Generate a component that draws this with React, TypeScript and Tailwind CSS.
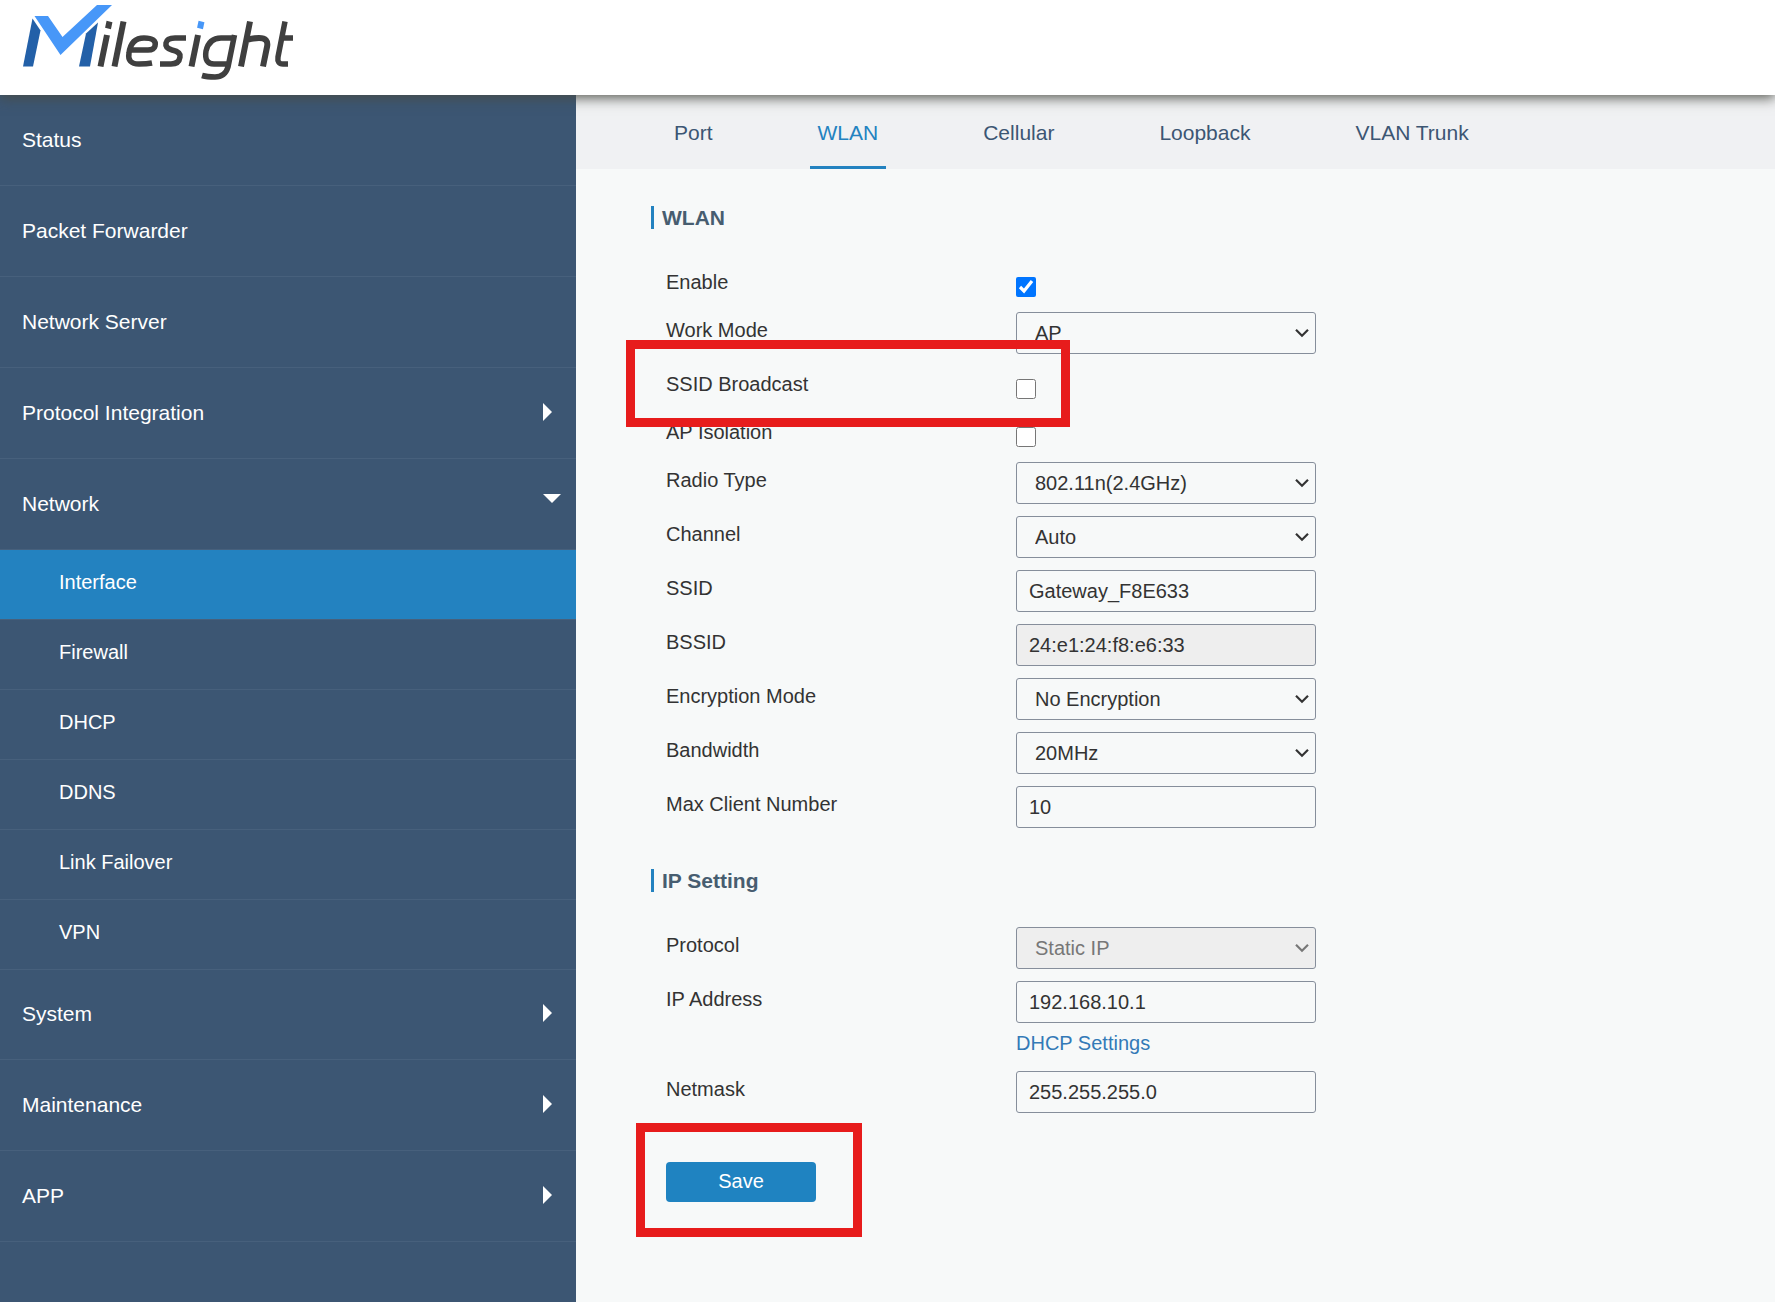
import React, { useId, useState } from 'react';
import clsx from 'clsx';

interface MenuItem {
  label: string;
  expandable?: boolean;
  children?: string[];
}

const MENU: MenuItem[] = [
  { label: 'Status' },
  { label: 'Packet Forwarder' },
  { label: 'Network Server' },
  { label: 'Protocol Integration', expandable: true },
  {
    label: 'Network',
    expandable: true,
    children: ['Interface', 'Firewall', 'DHCP', 'DDNS', 'Link Failover', 'VPN'],
  },
  { label: 'System', expandable: true },
  { label: 'Maintenance', expandable: true },
  { label: 'APP', expandable: true },
];

const TABS = ['Port', 'WLAN', 'Cellular', 'Loopback', 'VLAN Trunk'];

function Logo() {
  return (
    <svg width="300" height="95" viewBox="0 0 300 95" role="img" aria-label="Milesight">
      <path d="M32.500 18.500 L40.500 30.500 L33 66.500 L23 66.500 Z" fill="#2360a8" />
      <path d="M98 22.500 L90 66.500 L79 66.500 L86 33.500 Z" fill="#2360a8" />
      <path d="M34.500 16 L48 16 L62.500 37 L97 5 L112 5 L60.500 55 Z" fill="#4797f8" />
      <g fill="none" stroke="#3f3f3f" strokeWidth="6">
        <path d="M107 35 L100.500 66.500 M109.500 21.500 L108 28.500" />
        <path d="M123.500 21.500 L114.500 66.500" />
        <path
          d="M152 63 Q147 64 139 64 Q127 64 129 53 Q131 38 144 38 Q157 38 155 46 Q154 50 148 50 L131 50"
          strokeWidth="5.500"
        />
        <path
          d="M186 38 L175 38 Q167 38 166 43 Q165 48 172 50 Q181 52 180 57 Q179 64 171 64 L160 64"
          strokeWidth="5.500"
        />
        <path d="M198 35 L191.500 66.500" />
        <path
          d="M234.500 35 L228 67 Q225 77 215 77 Q207 77 202 75.500 M233 38 L221 38 Q209 38 206 51 Q204 64 214 64 L229 64"
          strokeWidth="5.500"
        />
        <path d="M250 21.500 L241 66.500 M247 40 Q253 38 259 38 Q269 38 267 47 L263 66.500" />
        <path
          d="M285 21.500 L278 57 Q277 64 283 64 L288 64 M283 38 L293 38"
          strokeWidth="5.500"
        />
      </g>
      <path d="M201.500 21.500 L200 28.500" stroke="#4797f8" strokeWidth="6" />
    </svg>
  );
}

function Caret({ open }: { open: boolean }) {
  return (
    <svg width="18" height="20" viewBox="0 0 18 20" fill="#fff" aria-hidden="true">
      {open ? <path d="M0 0 H18 L9 9 Z" /> : <path d="M0 0 L9 9 L0 18 Z" />}
    </svg>
  );
}

function Sidebar() {
  const [active, setActive] = useState('Interface');

  return (
    <nav className="w-[576px] shrink-0 bg-[#3c5673] text-white">
      <ul>
        {MENU.map((item) => (
          <li key={item.label}>
            <a
              href="#"
              className="flex h-[91px] items-center justify-between border-b border-[#47607c] pl-[22px] pr-[15px] text-[21px]"
            >
              {item.label}
              {item.expandable && <Caret open={!!item.children} />}
            </a>
            {item.children && (
              <ul className="-mb-px">
                {item.children.map((child) => (
                  <li key={child}>
                    <a
                      href="#"
                      onClick={() => setActive(child)}
                      className={clsx(
                        'flex h-[70px] items-center border-b border-[#47607c] pb-1.5 pl-[59px] text-[20px]',
                        child === active && 'bg-[#2382c0]',
                      )}
                    >
                      {child}
                    </a>
                  </li>
                ))}
              </ul>
            )}
          </li>
        ))}
      </ul>
    </nav>
  );
}

function Highlight({ className }: { className: string }) {
  return (
    <div className={clsx('pointer-events-none absolute z-10 border-9 border-[#e71c1c]', className)} />
  );
}

function SectionTitle({ children }: { children: React.ReactNode }) {
  return (
    <h2 className="border-l-3 border-[#2382c0] pl-2 text-[21px] leading-[23px] font-bold text-[#475d70]">
      {children}
    </h2>
  );
}

const controlClass =
  'block h-[42px] w-[300px] rounded-[3px] border border-[#868e9b] text-[20px] outline-none';

function CheckRow({
  label,
  defaultChecked,
  children,
}: {
  label: string;
  defaultChecked?: boolean;
  children?: React.ReactNode;
}) {
  const id = useId();
  return (
    <div className="relative flex h-12 items-start">
      <label htmlFor={id} className="w-[350px] leading-[36px]">
        {label}
      </label>
      <input
        id={id}
        type="checkbox"
        defaultChecked={defaultChecked}
        className="mt-[13px] size-5 accent-[#0075ff]"
      />
      {children}
    </div>
  );
}

function TextRow({
  label,
  value,
  readOnly,
  children,
}: {
  label: string;
  value: string;
  readOnly?: boolean;
  children?: React.ReactNode;
}) {
  const id = useId();
  return (
    <div className="flex items-start pb-3">
      <label htmlFor={id} className="w-[350px] leading-[36px]">
        {label}
      </label>
      <div>
        <input
          id={id}
          type="text"
          defaultValue={value}
          readOnly={readOnly}
          className={clsx(controlClass, 'px-3', readOnly && 'bg-[#eeeeee]')}
        />
        {children}
      </div>
    </div>
  );
}

function SelectRow({
  label,
  value,
  disabled,
}: {
  label: string;
  value: string;
  disabled?: boolean;
}) {
  const id = useId();
  return (
    <div className="flex items-start pb-3">
      <label htmlFor={id} className="w-[350px] leading-[36px]">
        {label}
      </label>
      <div className="relative">
        <select
          id={id}
          disabled={disabled}
          defaultValue={value}
          className={clsx(
            controlClass,
            'appearance-none px-[18px]',
            disabled && 'bg-[#eeeeee] text-[#777777]',
          )}
        >
          <option>{value}</option>
        </select>
        <svg
          className={clsx(
            'pointer-events-none absolute right-[7px] top-[16px]',
            disabled ? 'text-[#777777]' : 'text-[#333333]',
          )}
          width="14"
          height="10"
          viewBox="0 0 14 10"
          fill="none"
          stroke="currentColor"
          strokeWidth="2.2"
          aria-hidden="true"
        >
          <path d="M1 1.800 L7 7.800 L13 1.800" />
        </svg>
      </div>
    </div>
  );
}

export default function App() {
  const [tab, setTab] = useState('WLAN');

  return (
    <div className="flex min-h-screen flex-col bg-[#f7f9f9] font-['Liberation_Sans',Arial,sans-serif] text-[#333333]">
      <header className="relative z-10 h-[95px] bg-white shadow-[0_3px_12px_rgba(72,74,66,0.9)]">
        <Logo />
      </header>

      <div className="flex flex-1">
        <Sidebar />

        <main className="min-w-0 flex-1">
          <div className="flex h-[74px] gap-[89px] bg-[#f0f1f3] pl-[90px]">
            {TABS.map((name) => (
              <button
                key={name}
                type="button"
                onClick={() => setTab(name)}
                className={clsx(
                  'border-b-3 px-2 pt-[5px] text-[21px]',
                  name === tab
                    ? 'border-[#2382c0] text-[#2382c0]'
                    : 'border-transparent text-[#3c5673]',
                )}
              >
                {name}
              </button>
            ))}
          </div>

          <form className="pt-[37px] pl-[75px] text-[20px]" onSubmit={(e) => e.preventDefault()}>
            <SectionTitle>WLAN</SectionTitle>
            <div className="pt-[35px] pl-[15px]">
              <CheckRow label="Enable" defaultChecked />
              <SelectRow label="Work Mode" value="AP" />
              <CheckRow label="SSID Broadcast">
                <Highlight className="-top-[26px] -left-[40px] h-[87px] w-[444px]" />
              </CheckRow>
              <CheckRow label="AP Isolation" />
              <SelectRow label="Radio Type" value="802.11n(2.4GHz)" />
              <SelectRow label="Channel" value="Auto" />
              <TextRow label="SSID" value="Gateway_F8E633" />
              <TextRow label="BSSID" value="24:e1:24:f8:e6:33" readOnly />
              <SelectRow label="Encryption Mode" value="No Encryption" />
              <SelectRow label="Bandwidth" value="20MHz" />
              <TextRow label="Max Client Number" value="10" />
            </div>

            <div className="pt-[29px]">
              <SectionTitle>IP Setting</SectionTitle>
            </div>
            <div className="pt-[35px] pl-[15px]">
              <SelectRow label="Protocol" value="Static IP" disabled />
              <TextRow label="IP Address" value="192.168.10.1">
                <a href="#" className="-mb-1 block leading-[40px] text-[#337ab7]">
                  DHCP Settings
                </a>
              </TextRow>
              <TextRow label="Netmask" value="255.255.255.0" />

              <div className="relative mt-[37px] w-[150px]">
                <button
                  type="submit"
                  className="h-10 w-full rounded bg-[#1f83c1] pb-0.5 text-[20px] text-white"
                >
                  Save
                </button>
                <Highlight className="-top-[39px] -left-[30px] h-[114px] w-[226px]" />
              </div>
            </div>
          </form>
        </main>
      </div>
    </div>
  );
}
